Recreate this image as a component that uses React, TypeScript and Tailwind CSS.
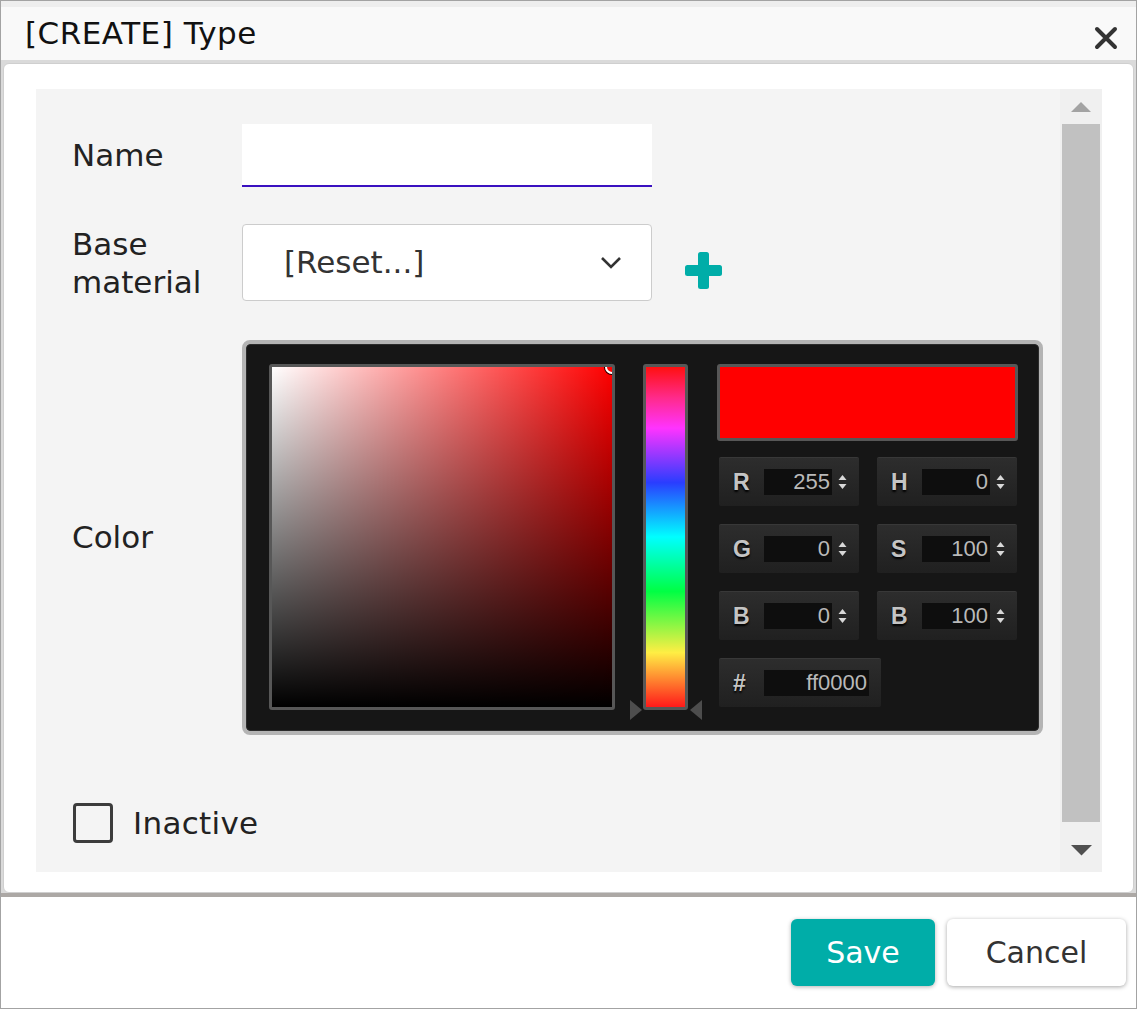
import React from "react"

function Spinner() {
    return (
        <svg width="9" height="18" viewBox="0 0 9 18" className="shrink-0">
            <path d="M0.5 7 L4.5 2 L8.5 7 Z" fill="#d8d8d8" />
            <path d="M0.5 11 L4.5 16 L8.5 11 Z" fill="#d8d8d8" />
        </svg>
    )
}

function Field({ label, value, wide }: { label: string; value: string; wide?: boolean }) {
    return (
        <div
            className={
                "flex h-[49px] items-center rounded-[2px] border-t border-[#383838] bg-linear-to-b from-[#2d2d2d] to-[#202020] pl-[14px] " +
                (wide ? "w-[162px]" : "w-[140px]")
            }
        >
            <span className="w-[31px] font-['Liberation_Sans'] text-[23px] font-bold text-[#c4c4c4] [text-shadow:0_2px_2px_#000]">
                {label}
            </span>
            <div
                className={
                    "flex h-[26px] items-center justify-end bg-[#0e0e0e] pr-[2px] font-['Liberation_Sans'] text-[22px] leading-none text-[#b9b9b9] " +
                    (wide ? "w-[105px]" : "w-[68px]")
                }
            >
                {value}
            </div>
            {!wide && (
                <div className="ml-[6px]">
                    <Spinner />
                </div>
            )}
        </div>
    )
}

function ColorPicker() {
    return (
        <div className="h-[395px] w-[801px] rounded-[8px] border-[4px] border-[#b4b4b4]">
            <div className="flex h-full rounded-[4px] border border-[#2c2c2c] bg-[#161616] pl-[22px] pt-[19px]">
                {/* saturation / value square */}
                <div className="h-[346px] w-[346px] rounded-[3px] border-[3px] border-[#575757]">
                    <div className="relative h-full w-full overflow-hidden bg-[#ff0000]">
                        <div className="absolute inset-0 bg-linear-to-r from-white to-transparent" />
                        <div className="absolute inset-0 bg-linear-to-t from-black to-transparent" />
                        <div className="absolute right-[-7px] top-[-7px] h-[14px] w-[14px] rounded-full border-2 border-white shadow-[0_0_0_1px_#000]" />
                    </div>
                </div>

                {/* hue bar */}
                <div className="relative ml-[28px] h-[346px] w-[45px] rounded-[3px] border-[3px] border-[#575757]">
                    <div className="h-full w-full bg-[linear-gradient(to_bottom,#ff1010,#ff2a8a_9%,#ff33ff_18%,#2a3dff_34%,#00ffff_50%,#00ff44_66%,#ffee44_84%,#ff1a1a)]" />
                    <svg width="14" height="22" viewBox="0 0 14 22" className="absolute left-[-17px] top-[332px]">
                        <path d="M1 1 L13 11 L1 21 Z" fill="#4d4d4d" />
                    </svg>
                    <svg width="14" height="22" viewBox="0 0 14 22" className="absolute right-[-18px] top-[332px]">
                        <path d="M13 1 L1 11 L13 21 Z" fill="#4d4d4d" />
                    </svg>
                </div>

                {/* preview + fields */}
                <div className="ml-[29px] flex w-[300px] flex-col">
                    <div className="h-[77px] w-[301px] rounded-[3px] border-[3px] border-[#575757] bg-[#ff0000]" />
                    <div className="ml-[2px] mt-[16px] grid grid-cols-[140px_140px] gap-x-[18px] gap-y-[18px]">
                        <Field label="R" value="255" />
                        <Field label="H" value="0" />
                        <Field label="G" value="0" />
                        <Field label="S" value="100" />
                        <Field label="B" value="0" />
                        <Field label="B" value="100" />
                        <Field label="#" value="ff0000" wide />
                    </div>
                </div>
            </div>
        </div>
    )
}

export default function App() {
    return (
        <div className="flex h-[1009px] w-[1137px] flex-col border border-[#a3a3a3] bg-white font-['DejaVu_Sans',sans-serif] text-[#222]">
            <div className="h-[6px] bg-[#eeeeee]" />

            {/* title bar */}
            <div className="flex h-[53px] items-center justify-between bg-[#f9f9f9] pl-[24px] pr-[18px]">
                <span className="text-[31px] leading-none tracking-[0.5px] text-[#111]">[CREATE] Type</span>
                <svg width="24" height="24" viewBox="0 0 24 24" className="mt-[8px]">
                    <path d="M3 3 L21 21 M21 3 L3 21" stroke="#333" strokeWidth="4" strokeLinecap="round" />
                </svg>
            </div>

            {/* body */}
            <div className="bg-[#dadada] px-[2px] pt-[3px]">
                <div className="h-[830px] rounded-[6px] border border-[#cfcfcf] bg-white pb-[20px] pl-[32px] pr-[31px] pt-[25px]">
                    <div className="flex h-full bg-[#f4f4f4]">
                        <div className="flex-1 pl-[36px] pt-[35px]">
                            {/* Name */}
                            <div className="flex h-[63px] items-center">
                                <span className="w-[170px] text-[31px]">Name</span>
                                <div className="h-[63px] w-[410px] border-b-2 border-[#3a10c0] bg-white" />
                            </div>

                            {/* Base material */}
                            <div className="mt-[37px] flex items-center">
                                <span className="w-[170px] text-[31px] leading-[38px]">
                                    Base
                                    <br />
                                    material
                                </span>
                                <div className="flex h-[77px] w-[410px] items-center justify-between rounded-[4px] border border-[#cccccc] bg-white pl-[41px] pr-[29px]">
                                    <span className="text-[31px] text-[#333]">[Reset...]</span>
                                    <svg width="22" height="14" viewBox="0 0 22 14">
                                        <path d="M2 2 L11 11 L20 2" fill="none" stroke="#333" strokeWidth="2.6" />
                                    </svg>
                                </div>
                                <svg width="37" height="37" viewBox="0 0 37 37" className="ml-[33px] mt-[16px]">
                                    <rect x="13" y="0" width="11" height="37" rx="2.5" fill="#00ada8" />
                                    <rect x="0" y="13" width="37" height="11" rx="2.5" fill="#00ada8" />
                                </svg>
                            </div>

                            {/* Color */}
                            <div className="mt-[39px] flex items-center">
                                <span className="w-[170px] text-[31px]">Color</span>
                                <ColorPicker />
                            </div>

                            {/* Inactive */}
                            <div className="mt-[65px] flex items-center pl-[1px]">
                                <div className="h-[40px] w-[40px] rounded-[4px] border-[3px] border-[#3c3c3c]" />
                                <span className="ml-[20px] text-[31px] tracking-[0.3px]">Inactive</span>
                            </div>
                        </div>

                        {/* scrollbar */}
                        <div className="flex w-[42px] flex-col items-center bg-[#f0f0f0]">
                            <div className="flex h-[35px] items-center justify-center">
                                <svg width="20" height="11" viewBox="0 0 20 11">
                                    <path d="M0 11 L10 1 L20 11 Z" fill="#a3a3a3" />
                                </svg>
                            </div>
                            <div className="w-[38px] flex-1 bg-[#c1c1c1]" />
                            <div className="flex h-[50px] items-start justify-center pt-[23px]">
                                <svg width="21" height="11" viewBox="0 0 21 11">
                                    <path d="M0 0 L10.5 10.5 L21 0 Z" fill="#505050" />
                                </svg>
                            </div>
                        </div>
                    </div>
                </div>
            </div>

            <div className="h-[4px] bg-[#aca8a5]" />

            {/* footer */}
            <div className="flex flex-1 items-start justify-end gap-[12px] pr-[10px] pt-[22px]">
                <button className="h-[67px] w-[144px] rounded-[6px] bg-[#00ada8] text-[30px] text-white shadow-[0_1px_4px_rgba(0,0,0,0.3)]">
                    Save
                </button>
                <button className="h-[67px] w-[179px] rounded-[6px] bg-white text-[30px] text-[#333] shadow-[0_1px_4px_rgba(0,0,0,0.35)]">
                    Cancel
                </button>
            </div>
        </div>
    )
}
